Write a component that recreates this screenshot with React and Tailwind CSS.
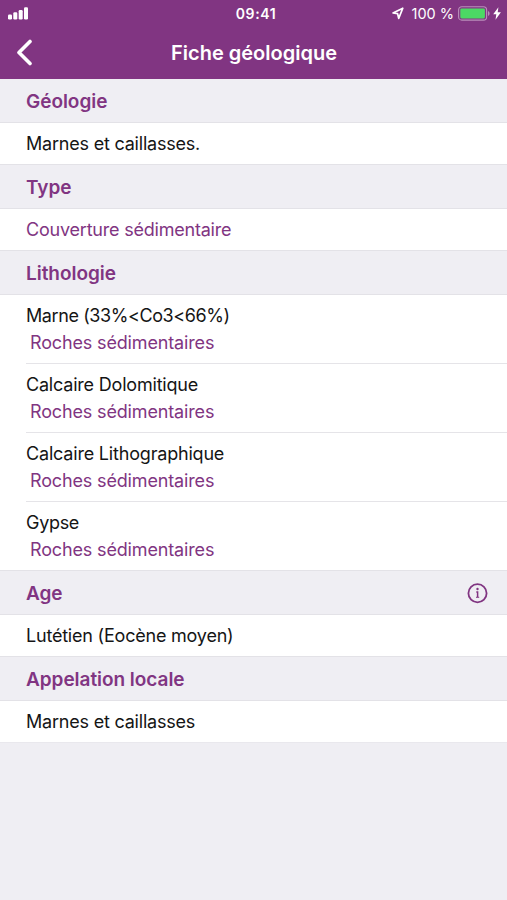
import React from 'react';

const lithology = [
  { name: 'Marne (33%<Co3<66%)', family: 'Roches sédimentaires', tracking: 'tracking-[-0.41px]' },
  { name: 'Calcaire Dolomitique', family: 'Roches sédimentaires', tracking: 'tracking-[-0.2px]' },
  { name: 'Calcaire Lithographique', family: 'Roches sédimentaires', tracking: 'tracking-[-0.19px]' },
  { name: 'Gypse', family: 'Roches sédimentaires', tracking: 'tracking-[-0.3px]' },
];

function StatusBar() {
  return (
    <div className="grid grid-cols-[1fr_auto_1fr] items-center h-[27px] pl-2 pr-[6px]">
      <svg width="20" height="13" viewBox="0 0 20 13" fill="white">
        <rect x="0" y="7.5" width="4" height="5" rx="1.2" />
        <rect x="5.3" y="5.3" width="4" height="7.2" rx="1.2" />
        <rect x="10.7" y="3" width="4" height="9.5" rx="1.2" />
        <rect x="16" y="0.3" width="4" height="12.2" rx="1.2" />
      </svg>
      <span className="pl-[3px] text-[14px] font-semibold tracking-[0.6px]">09:41</span>
      <div className="flex items-center justify-end">
        <svg className="mr-[7px]" width="13" height="13" viewBox="0 0 13 13" fill="none" stroke="white" strokeWidth="1.7" strokeLinejoin="round">
          <path d="M11.8 1.2 2 5.9 6.6 6.7 7.7 11.4Z" />
        </svg>
        <span className="text-[14.5px] mr-1 whitespace-nowrap">100 %</span>
        <svg className="mr-[3px]" width="32" height="15" viewBox="0 0 32 15">
          <rect x="0.6" y="0.7" width="28" height="13.4" rx="3.2" fill="none" stroke="#b98fba" strokeWidth="1.1" />
          <rect x="2.3" y="2.4" width="24.6" height="10" rx="1.4" fill="#4cd964" />
          <path d="M30 5v5c1-.4 1.6-1.3 1.6-2.5S31 5.4 30 5Z" fill="#b98fba" />
        </svg>
        <svg width="8" height="13" viewBox="0 0 8 13" fill="white">
          <path d="M5.4 0.3 0.2 7.2H3.3L2.5 12.7 7.9 5.3H4.7Z" />
        </svg>
      </div>
    </div>
  );
}

function SectionHeader({ title, first, info }) {
  return (
    <div
      className={`flex items-center justify-between pt-[2px] pl-[26px] pr-[19px] bg-[#efeef3] border-b border-[#e3e2e7] text-[#813582] ${
        first ? 'h-11' : 'h-[45px] border-t'
      }`}
    >
      <h2 className="text-[19px] leading-6 font-semibold tracking-[-0.04px]">{title}</h2>
      {info && (
        <svg width="21" height="21" viewBox="0 0 21 21" fill="none" stroke="currentColor">
          <circle cx="10.5" cy="10.2" r="9.1" strokeWidth="1.8" />
          <path d="M9.3 8.9h1.3v5.2" strokeWidth="1.5" />
          <path d="M9 14.3h3.2" strokeWidth="1" />
          <circle cx="10.5" cy="6" r="1.2" fill="currentColor" stroke="none" />
        </svg>
      )}
    </div>
  );
}

function Row({ children, purple }) {
  return (
    <div
      className={`flex items-center h-[41px] pl-[26px] bg-white tracking-[-0.21px] ${
        purple ? 'text-[#813582]' : 'text-[#151515]'
      }`}
    >
      {children}
    </div>
  );
}

export default function App() {
  return (
    <div className="w-full min-h-screen bg-[#efeef3] font-['Inter',sans-serif] text-[18px] leading-[27px]">
      <header className="h-[79px] bg-[#813582] text-white">
        <StatusBar />
        <div className="grid grid-cols-[1fr_auto_1fr] items-center h-[51px] px-4">
          <svg width="17" height="27" viewBox="0 0 17 27" fill="none" stroke="white" strokeWidth="3.6" strokeLinecap="round" strokeLinejoin="round">
            <path d="M14 2.5 3 13.5 14 24.5" />
          </svg>
          <h1 className="pl-px pt-px text-[20px] font-semibold">Fiche géologique</h1>
        </div>
      </header>

      <SectionHeader title="Géologie" first />
      <Row>Marnes et caillasses.</Row>

      <SectionHeader title="Type" />
      <Row purple>Couverture sédimentaire</Row>

      <SectionHeader title="Lithologie" />
      <ul className="bg-white pl-[26px] h-[275px]">
        {lithology.map((rock) => (
          <li key={rock.name} className="h-[69px] pt-[7px] border-b border-[#e5e4e8] last:border-b-0 last:h-[68px]">
            <p className={`text-[#151515] ${rock.tracking}`}>{rock.name}</p>
            <p className="pl-1 text-[#813582] tracking-[-0.15px]">{rock.family}</p>
          </li>
        ))}
      </ul>

      <SectionHeader title="Age" info />
      <Row>Lutétien (Eocène moyen)</Row>

      <SectionHeader title="Appelation locale" />
      <Row>Marnes et caillasses</Row>
      <div className="border-t border-[#e9e8ed]" />
    </div>
  );
}
